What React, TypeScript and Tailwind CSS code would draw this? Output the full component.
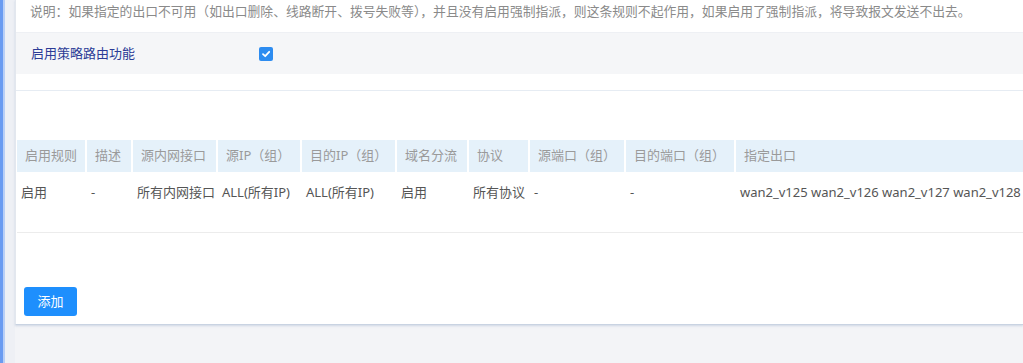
import React from "react";

const cols = [
  { w: "w-[68px]", head: "启用规则", cell: "启用" },
  { w: "w-[44px]", head: "描述", cell: "-" },
  { w: "w-[83px]", head: "源内网接口", cell: "所有内网接口" },
  { w: "w-[82px]", head: "源IP（组）", cell: "ALL(所有IP)" },
  { w: "w-[93px]", head: "目的IP（组）", cell: "ALL(所有IP)" },
  { w: "w-[70px]", head: "域名分流", cell: "启用" },
  { w: "w-[59px]", head: "协议", cell: "所有协议" },
  { w: "w-[94px]", head: "源端口（组）", cell: "-" },
  { w: "w-[108px]", head: "目的端口（组）", cell: "-" },
  { w: "flex-1", head: "指定出口", cell: "wan2_v125 wan2_v126 wan2_v127 wan2_v128" },
];

const App = () => {
  return (
    <div className="w-[1023px] h-[363px] flex bg-[#f3f4f7] overflow-hidden font-['Noto_Sans','Noto_Sans_CJK_SC',sans-serif] text-[13px]">
      <div className="w-[3px] bg-[#6a9bf1]" />
      <div className="w-[2px] bg-[#b9cff6]" />
      <div className="w-[10px] bg-[#eef0f5]" />
      <div className="flex-1 flex flex-col">
        <div className="h-[325px] bg-white border-l border-[#e3e7ee] border-b border-b-[#c9d3e2] shadow-[0_1px_2px_rgba(170,185,210,0.5)] flex flex-col">
          <div className="h-[32px] pl-[14px] text-[12.8px] text-[#8a8a8a] leading-[22px] whitespace-nowrap">
            说明：如果指定的出口不可用（如出口删除、线路断开、拨号失败等），并且没有启用强制指派，则这条规则不起作用，如果启用了强制指派，将导致报文发送不出去。
          </div>
          <div className="h-[42px] bg-[#f5f6f8] border-t border-[#eef0f4] flex items-center pl-[15px]">
            <span className="w-[228px] text-[#2c3b96]">启用策略路由功能</span>
            <span className="w-[14px] h-[14px] rounded-[2px] bg-[#2d8cf0] flex items-center justify-center">
              <svg width="10" height="10" viewBox="0 0 10 10" fill="none">
                <path d="M2 5.2 L4.2 7.2 L8.2 2.8" stroke="white" strokeWidth="1.8" strokeLinecap="round" strokeLinejoin="round" />
              </svg>
            </span>
          </div>
          <div className="h-[16px]" />
          <div className="h-px bg-[#e6ecf3]" />
          <div className="h-[49px]" />
          <div className="pl-px flex flex-col">
            <div className="flex gap-[2px] h-[32px]">
              {cols.map((c) => (
                <div key={c.head} className={`${c.w} bg-[#e5f1fa] flex items-center pl-[8px] text-[#9a9a9a] whitespace-nowrap`}>
                  {c.head}
                </div>
              ))}
            </div>
            <div className="flex gap-[2px] h-[61px] border-b border-[#ececec]">
              {cols.map((c) => (
                <div key={c.head} className={`${c.w} pl-[4px] pt-[10px] leading-[20px] text-[#555555] whitespace-nowrap`}>
                  {c.cell}
                </div>
              ))}
            </div>
          </div>
          <div className="h-[54px]" />
          <div className="pl-[8px]">
            <button className="w-[53px] h-[29px] rounded-[3px] bg-[#1e8ffd] text-white text-[13px]">添加</button>
          </div>
        </div>
      </div>
    </div>
  );
};

export default App;
